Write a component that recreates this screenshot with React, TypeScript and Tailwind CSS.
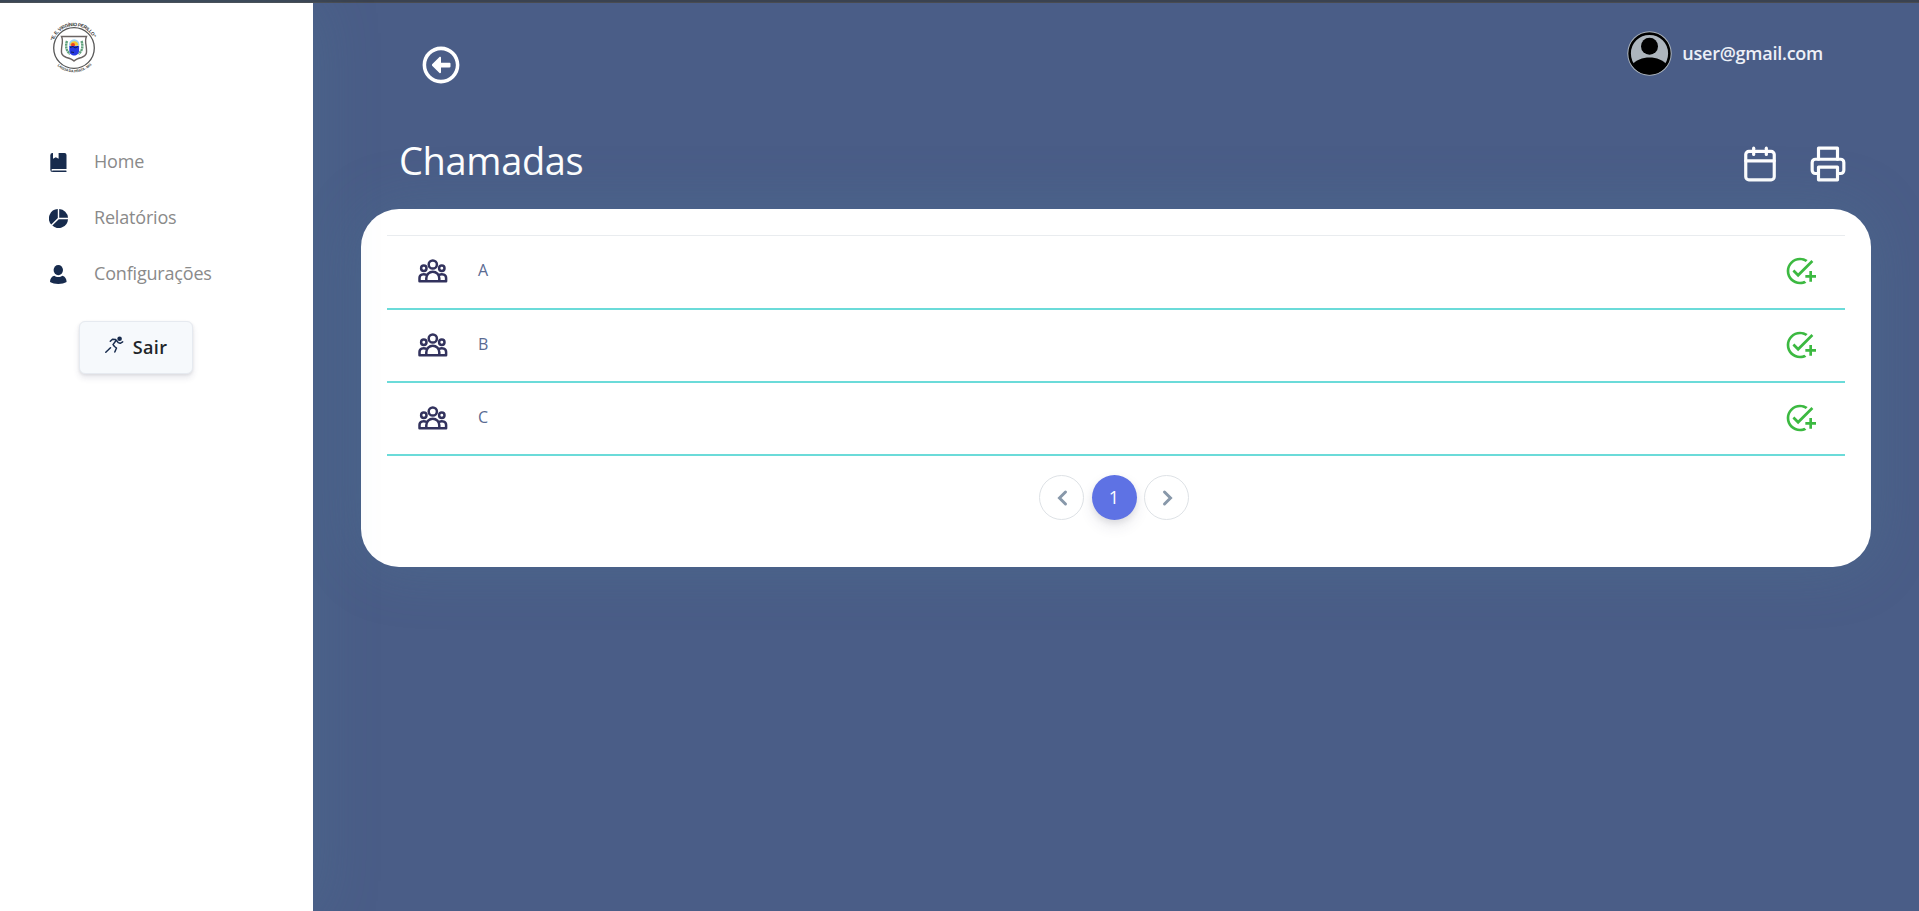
import React from "react";
import { MdAddTask } from "react-icons/md";
import { FaRegArrowAltCircleLeft } from "react-icons/fa";
import { FiCalendar, FiPrinter } from "react-icons/fi";

const ink = "#172b4d";

function Crest() {
  return (
    <svg width="50" height="54" viewBox="0 0 50 54" fill="none" className="block">
      <defs>
        <path id="top" d="M4.500 20A21.500 21.500 0 0 1 45.500 20" />
        <path id="bottom" d="M7.500 44A24.500 24.500 0 0 0 42.500 44" />
      </defs>
      <circle cx="25" cy="27" r="20.300" stroke="#555" strokeWidth="1.300" />
      <text fontSize="4.800" fontWeight="700" fill="#333" fontFamily="Liberation Sans, sans-serif">
        <textPath href="#top" textLength="51">"E. E. VIRGÍNIO PERILLO"</textPath>
      </text>
      <text fontSize="3.600" fontWeight="700" fill="#444" fontFamily="Liberation Sans, sans-serif">
        <textPath href="#bottom" startOffset="1" textLength="38">LAGOA DA PRATA - MG</textPath>
      </text>
      <path d="M12.500 15.500h25c-1.500 3-1.200 5-.4 9 1 7.500 1 10-4.600 12-3.500 1-6 2-7.500 3.500-1.500-1.500-4-2.500-7.500-3.500-5.600-2-5.600-4.500-4.600-12 .8-4 1.100-6-.4-9Z" stroke="#6b6463" strokeWidth="1.400" />
      <path d="M18 20c-1.800 5-.8 10 3 13M32.500 20c1.800 5 .8 10-3 13" stroke="#5fa17c" strokeWidth="2.400" strokeDasharray="2.200 .5" />
      <circle cx="25.200" cy="23.500" r="5.200" fill="#9fd4f2" />
      <path d="M21 24.500a4.200 4.200 0 0 1 8.400 0Z" fill="#f6c62f" />
      <circle cx="24" cy="24" r="2" fill="#ee3d24" />
      <path d="M20.300 25h9.800v4.500c0 3-2.500 5-4.900 5s-4.900-2-4.900-5Z" fill="#2738e0" />
      <path d="M21 26.500l3-1 2 1.500 3-1.500M22 31l3 .5" stroke="#111a55" strokeWidth="1" />
    </svg>
  );
}

function BookIcon() {
  return (
    <svg width="17" height="19" viewBox="0 0 17 19" fill={ink}>
      <path d="M2.500 0H3v5.800l2.800-1.600 2.800 1.600V0H14.500A2 2 0 0 1 16.500 2v14H2.400C1.800 16 1.500 16.300 1.500 16.900c0 .6.300 1 .9 1H2.500V19A2.200 2.200 0 0 1 .3 16.800V2.200A2.200 2.200 0 0 1 2.500 0Z" />
      <rect x="2.200" y="17.600" width="14.300" height="1.400" rx=".5" />
    </svg>
  );
}

function PieIcon() {
  return (
    <svg width="19" height="19" viewBox="0 0 19 19" fill={ink}>
      <path d="M8.800 0v9.100L2.300 15.600A9.400 9.400 0 0 1 8.800 0ZM10.200 0A9.400 9.400 0 0 1 19 8.800H10.200ZM9.800 10.200H19A9.400 9.400 0 0 1 3.300 16.600Z" />
    </svg>
  );
}

function PersonIcon() {
  return (
    <svg width="17" height="19" viewBox="0 0 17 19" fill={ink}>
      <ellipse cx="8.300" cy="5.100" rx="4.700" ry="5.100" />
      <path d="M4.200 10.800C5.300 11.600 6.700 12.100 8.300 12.100s3-.5 4.100-1.300c2.600.6 4.200 3 4.200 6.300C14.500 18.400 11.400 19 8.300 19S2.100 18.400 0 17.100C0 13.800 1.600 11.400 4.200 10.800Z" />
    </svg>
  );
}

function RunnerIcon() {
  return (
    <svg width="19" height="18" viewBox="0 0 19 18" fill="none" stroke={ink} strokeWidth="1.500" strokeLinecap="round" strokeLinejoin="round">
      <circle cx="14.600" cy="2.700" r="2.300" fill={ink} stroke="none" />
      <path d="M5.300 5.300 7.500 3.200 10.300 3.400 12 5 13.200 6.600 15.200 7.300 17.700 5.800M10.700 5 8 8.600 9.500 10.500 11.500 12 9.800 16M.8 16.200 3.400 13.800 5.500 11.700" />
    </svg>
  );
}

function GroupIcon() {
  return (
    <svg width="30" height="24" viewBox="0 0 30 24" fill="none" stroke="#32325d" strokeWidth="2.500" strokeLinejoin="round">
      <circle cx="14.800" cy="5.500" r="4.100" />
      <circle cx="5.800" cy="9.300" r="2.700" />
      <circle cx="23.800" cy="9.300" r="2.700" />
      <path d="M8.300 22.200v-3a6.500 6.500 0 0 1 13 0v3M8.600 15.900C5 14.300 1.500 15.900 1.500 19v3.200H28.100V19c0-3.100-3.500-4.700-7.100-3.100" />
    </svg>
  );
}

function Chevron({ d }: { d: string }) {
  return (
    <svg width="12" height="18" viewBox="0 0 12 18" fill="none" stroke="#8898aa" strokeWidth="3" strokeLinecap="round" strokeLinejoin="miter">
      <path d={d} />
    </svg>
  );
}

const nav = [
  { label: "Home", icon: <BookIcon /> },
  { label: "Relatórios", icon: <PieIcon /> },
  { label: "Configurações", icon: <PersonIcon /> },
];

const rows = ["A", "B", "C"];

export default function App() {
  return (
    <div className="flex h-[911px] w-full flex-col overflow-hidden bg-[#4a5d87] font-['Open_Sans',sans-serif]">
      <div className="h-[3px] shrink-0 border-b border-[#494b50] bg-[#3a4250]" />
      <div className="flex min-h-0 flex-1">
        <aside className="relative w-[313px] shrink-0 bg-white shadow-[0_0_60px_0_rgba(80,130,155,0.28)]">
          <div className="h-[70px] pt-[18px] pl-[49px]">
            <Crest />
          </div>
          <nav className="mt-[60px] flex flex-col">
            {nav.map((n) => (
              <a key={n.label} className="flex h-14 items-center pl-12">
                <span className="flex w-[46px] items-center pt-[3px]">
                  <span className="flex w-[21px] justify-center">{n.icon}</span>
                </span>
                <span className="-mt-px text-[18px] leading-7 font-normal tracking-[-0.01em] text-[#8a8a8a]">{n.label}</span>
              </a>
            ))}
          </nav>
          <button className="mt-5 ml-[79px] flex h-[53px] w-[114px] items-center justify-center gap-[9px] rounded-md border border-[#e6eaf0] bg-[#f6f9fc] shadow-[0_4px_6px_rgba(50,50,93,0.11),0_1px_3px_rgba(0,0,0,0.08)]">
            <span className="pb-[5px]">
              <RunnerIcon />
            </span>
            <span className="text-[18px] font-semibold tracking-[0.02em] text-[#212529]">Sair</span>
          </button>
        </aside>
        <main className="flex min-w-0 flex-1 flex-col">
          <header className="flex h-[120px] items-start justify-between pr-24 pl-[109px]">
            <FaRegArrowAltCircleLeft className="mt-[42.500px] size-[38px] text-white" />
            <div className="mt-7 flex items-center gap-[10px]">
              <svg width="45" height="45" viewBox="0 0 45 45">
                <circle cx="22.500" cy="22.500" r="22.200" fill="#adb5bd" />
                <circle cx="22.500" cy="22.500" r="19.900" fill="none" stroke="#000" strokeWidth="2.600" />
                <circle cx="22.500" cy="15.300" r="8.500" />
                <path d="M5 34C12 24 33 24 40 34A21 21 0 0 1 5 34Z" />
              </svg>
              <span className="text-[18px] font-semibold tracking-[-0.25px] text-[#edf0f7]">user@gmail.com</span>
            </div>
          </header>
          <div className="flex h-[86px] items-start justify-between pr-[72px] pl-[86px]">
            <h1 className="mt-[9px] text-[38px] leading-[56px] tracking-[-0.35px] text-white">Chamadas</h1>
            <div className="mt-[22px] flex gap-[30px] text-white">
              <FiCalendar size={38} />
              <FiPrinter size={38} />
            </div>
          </div>
          <section className="mx-12 h-[358px] rounded-[38px] bg-white px-[26px] pt-[26px] shadow-[0_0_60px_0_rgba(80,130,155,0.28)]">
            <div className="border-t border-[#e9ecef]">
              {rows.map((r) => (
                <div key={r} className="flex h-[73px] items-center border-b-2 border-[#6bdbd9] pr-[29px] pb-px pl-[31px] first:h-[74px] first:pb-[2px]">
                  <GroupIcon />
                  <span className="ml-[30px] flex-1 pb-[3px] text-[16px] font-normal text-[#5a6a92]">{r}</span>
                  <MdAddTask size={32} className="text-[#3cb941]" />
                </div>
              ))}
            </div>
            <div className="mt-[19px] flex justify-center gap-[7.500px] pr-1">
              <button className="flex size-[45px] items-center justify-center rounded-full border border-[#dee2e6]">
                <Chevron d="M9.500 3 3.500 9l6 6" />
              </button>
              <button className="flex size-[45px] items-center justify-center rounded-full bg-[#5e72e4] text-[18px] font-medium text-white shadow-[0_7px_14px_rgba(50,50,93,0.1),0_3px_6px_rgba(0,0,0,0.08)]">
                1
              </button>
              <button className="flex size-[45px] items-center justify-center rounded-full border border-[#dee2e6]">
                <Chevron d="M3.500 3l6 6-6 6" />
              </button>
            </div>
          </section>
        </main>
      </div>
    </div>
  );
}
